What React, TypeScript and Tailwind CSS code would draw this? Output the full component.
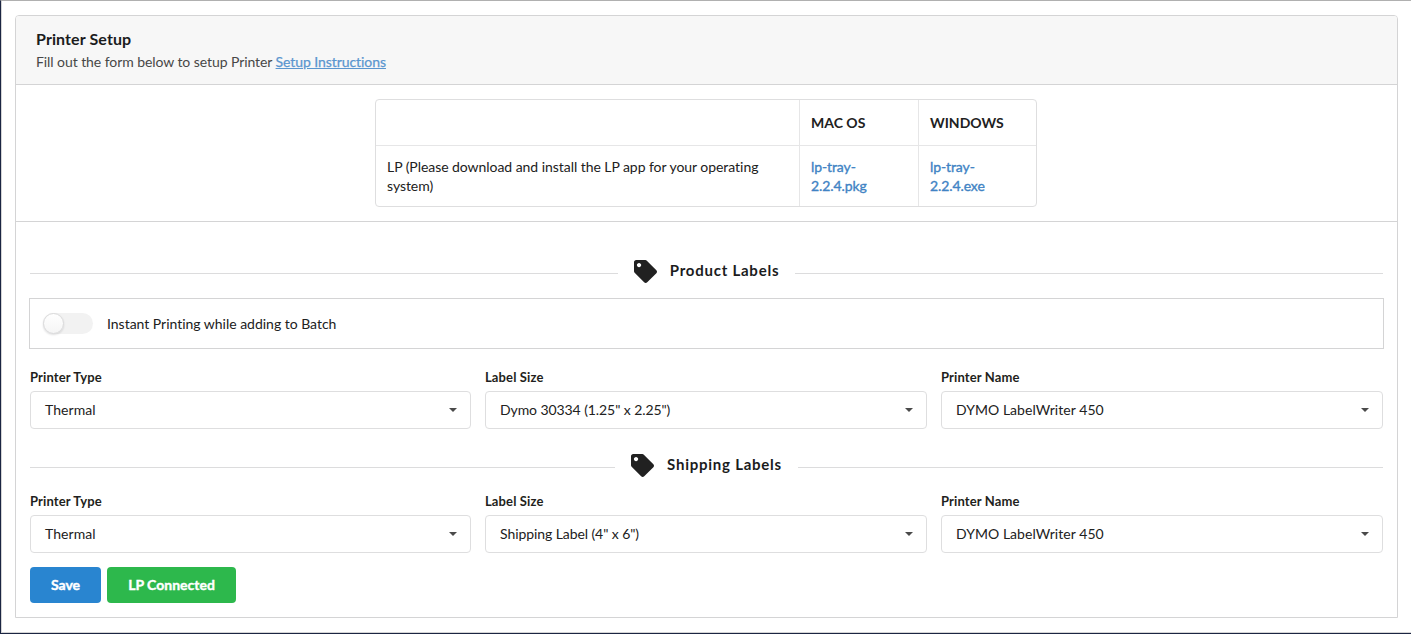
import React from "react";
import { FaTag } from "react-icons/fa";

function SectionDivider({ title }: { title: string }) {
  return (
    <div className="flex h-6 items-center">
      <div className="mt-[5px] h-px flex-1 bg-[#dcdcdd]" />
      <h4 className="flex items-center px-4 text-[#212121]">
        <FaTag className="mt-px mr-[13px] size-[23px]" />
        <span className="mb-[2px] text-[15px] leading-5 font-bold tracking-[0.76px] text-[#1b1c1d]">{title}</span>
      </h4>
      <div className="mt-[5px] h-px flex-1 bg-[#dcdcdd]" />
    </div>
  );
}

function SelectField({ label, value, tight }: { label: string; value: string; tight?: boolean }) {
  return (
    <div className="min-w-0">
      <div className="h-[22px] text-[13px] leading-[16px] font-bold tracking-[0.12px] text-[#1f1f20]">{label}</div>
      <div className="flex h-[38px] items-center justify-between rounded-[4px] border border-[#dededf] bg-white pr-[13px] pl-[14px] text-[14px] text-[#212121]">
        <span className={tight ? "mb-[2px] tracking-[-0.08px]" : "mb-[2px] tracking-[0.05px]"}>{value}</span>
        <svg width="8" height="4" viewBox="0 0 8 4" className="fill-[#4a4a4a]">
          <path d="M0 0h8L4 4z" />
        </svg>
      </div>
    </div>
  );
}

function Fields({ size }: { size: string }) {
  return (
    <div className="grid grid-cols-[441px_442px_442px] gap-[14px]">
      <SelectField label="Printer Type" value="Thermal" />
      <SelectField label="Label Size" value={size} tight />
      <SelectField label="Printer Name" value="DYMO LabelWriter 450" />
    </div>
  );
}

export default function App() {
  return (
    <div className="h-[634px] w-[1411px] overflow-hidden border-t border-b border-l border-t-[#b0b0b0] border-b-[#1b2542] border-l-[#1b2542] bg-white font-[Lato,sans-serif] text-[14px] text-[#212121] [font-variant-ligatures:none]">
      <div className="h-[632px] border-b border-l border-[#d4d4d5] pt-[14px] pl-[13px]">
        <section className="h-[603px] w-[1383px] rounded-t-[4px] border border-[#d4d4d5]">
          <header className="h-[69px] rounded-t-[3px] border-b border-[#d4d4d5] bg-[#f7f7f7] pt-[12px] pl-5">
            <h1 className="text-[16px] leading-[22px] font-bold tracking-[0.1px] text-[#1b1c1d]">Printer Setup</h1>
            <p className="text-[14px] leading-[24px] tracking-[-0.07px] text-[#474747]">
              Fill out the form below to setup Printer{" "}
              <a className="text-[#5b96cf] underline [-webkit-text-stroke:0.25px_#5b96cf]">Setup Instructions</a>
            </p>
          </header>
          <div className="h-[137px] border-b border-[#d4d4d5] pt-[14px]">
            <div className="ml-[359px] grid h-[108px] w-[662px] grid-cols-[423px_119px_118px] grid-rows-[46px_60px] rounded-[4px] border border-[#dededf] leading-[19px]">
              <div className="border-b border-[#e6e6e7]" />
              <div className="border-b border-l border-[#e6e6e7] pt-[13px] pl-[11px] font-bold">MAC OS</div>
              <div className="border-b border-l border-[#e6e6e7] pt-[13px] pl-[11px] font-bold">WINDOWS</div>
              <div className="pt-[11px] pr-[11px] pl-[11px] tracking-[-0.05px]">LP (Please download and install the LP app for your operating system)</div>
              <div className="border-l border-[#e6e6e7] pt-[11px] pl-[11px] tracking-[-0.1px] text-[#4183c4] [-webkit-text-stroke:0.35px_#4183c4]">
                lp-tray-
                <br />
                2.2.4.pkg
              </div>
              <div className="border-l border-[#e6e6e7] pt-[11px] pl-[11px] tracking-[-0.1px] text-[#4183c4] [-webkit-text-stroke:0.35px_#4183c4]">
                lp-tray-
                <br />
                2.2.4.exe
              </div>
            </div>
          </div>
          <form className="pt-[37px] pr-[14px] pl-[14px]">
            <SectionDivider title="Product Labels" />
            <div className="mt-[15px] -mr-px -ml-px flex h-[51px] items-center border border-[#d4d4d5] pl-[13px]">
              <div className="flex h-[21px] w-[50px] items-center rounded-full bg-[#f2f2f2]">
                <div className="size-[21px] rounded-full border border-[#dadadb] bg-gradient-to-b from-white to-[#f5f5f5] shadow-[0_1px_2px_0_rgba(34,36,38,0.15)]" />
              </div>
              <span className="ml-[14px] tracking-[-0.02px]">Instant Printing while adding to Batch</span>
            </div>
            <div className="mt-[20px]">
              <Fields size={'Dymo 30334 (1.25" x 2.25")'} />
            </div>
            <div className="mt-[24px] mb-[16px]">
              <SectionDivider title="Shipping Labels" />
            </div>
            <Fields size={'Shipping Label (4" x 6")'} />
            <div className="mt-[14px] flex gap-[6px] font-bold text-white [-webkit-text-stroke:0.4px_white]">
              <button type="button" className="h-9 w-[71px] rounded-[4px] bg-[#2985d0] pb-[2px]">Save</button>
              <button type="button" className="h-9 w-[129px] rounded-[4px] bg-[#2db84c] pb-[2px]">LP Connected</button>
            </div>
          </form>
        </section>
      </div>
    </div>
  );
}
